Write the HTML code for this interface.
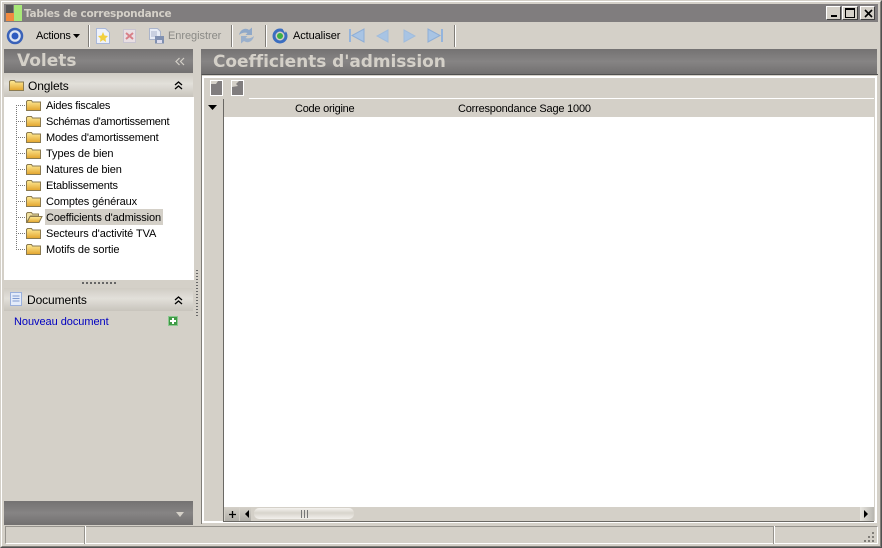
<!DOCTYPE html>
<html><head><meta charset="utf-8">
<style>
*{margin:0;padding:0;box-sizing:border-box}
html,body{width:882px;height:548px;overflow:hidden;background:#d4d0c8}
body{position:relative;font-family:"Liberation Sans",sans-serif;font-size:11px;color:#000}
div,span,svg{position:absolute}
.t{white-space:nowrap;line-height:14px;height:14px}
.sep{width:2px;height:22px;top:25px;background:linear-gradient(90deg,#807d78 50%,#fff 50%)}
.dot{height:1px;background:repeating-linear-gradient(90deg,#777 0 1px,transparent 1px 2px)}
.h{font-family:"DejaVu Sans",sans-serif;font-weight:bold;color:#d4d0c8;white-space:nowrap}
.bar{background:linear-gradient(#747272,#868484 50%,#727070)}
.lt{background:linear-gradient(#d0ccc4,#e2e0da 45%,#c8c4bc)}
</style></head><body>
<svg width="0" height="0"><defs>
<linearGradient id="fg" x1="0" y1="0" x2="0" y2="1"><stop offset="0" stop-color="#ffec98"/><stop offset="1" stop-color="#e2a42c"/></linearGradient>
<symbol id="f" viewBox="0 0 15 11"><path d="M.5 10.500V1.500l1-1h4l1 1.500h8v8.500z" fill="url(#fg)" stroke="#8a7a50"/></symbol>
<symbol id="fo" viewBox="0 0 17 11"><path d="M.5 10.500V1.500l1-1h4l1 1.500h6v2h-8l-4 6.500z" fill="#f0e0a0" stroke="#8a7a50"/><path d="M1 10.500l3-6h12l-3 6z" fill="url(#fg)" stroke="#8a7a50"/></symbol>
<symbol id="dbl" viewBox="0 0 9 9"><path d="M1 4l3.500-3L8 4M1 8l3.500-3L8 8" fill="none" stroke="#000" stroke-width="1.300"/></symbol>
</defs></svg>

<!-- window frame -->
<div style="left:0;top:0;width:882px;height:548px;border-top:1px solid #d4d0c8;border-left:1px solid #d4d0c8;border-right:1px solid #505050;border-bottom:1px solid #505050"></div>
<div style="left:1px;top:1px;width:880px;height:546px;border-top:1px solid #fff;border-left:1px solid #fff;border-right:1px solid #807d78;border-bottom:1px solid #807d78"></div>

<!-- title bar -->
<div style="left:4px;top:4px;width:874px;height:18px;background:#807d7e"></div>
<div style="left:6px;top:5px;width:7px;height:8px;background:#555"></div>
<div style="left:6px;top:13px;width:8px;height:8px;background:#f08a40"></div>
<div style="left:14px;top:5px;width:8px;height:16px;background:#a8e878"></div>
<div class="t h" style="left:24px;top:7px;font-size:10.500px;letter-spacing:-.28px">Tables de correspondance</div>
<div style="left:826px;top:6px;width:15px;height:14px;background:#d4d0c8;border:1px solid;border-color:#fff #404040 #404040 #fff"><div style="left:4px;top:8px;width:6px;height:2px;background:#000"></div></div>
<div style="left:842px;top:6px;width:16px;height:14px;background:#d4d0c8;border:1px solid;border-color:#fff #404040 #404040 #fff"><div style="left:2px;top:1px;width:10px;height:10px;border:1px solid #000;border-top-width:2px"></div></div>
<div style="left:860px;top:6px;width:15px;height:14px;background:#d4d0c8;border:1px solid;border-color:#fff #404040 #404040 #fff"><svg style="left:3px;top:2px" width="9" height="9"><path d="M1 1l7 7M8 1L1 8" stroke="#000" stroke-width="1.600"/></svg></div>

<!-- toolbar -->
<svg style="left:6px;top:27px" width="18" height="18"><circle cx="9" cy="9" r="7" fill="#dfe6f2" stroke="#3a62b8" stroke-width="2.500"/><circle cx="9" cy="9" r="3.500" fill="#2f5cc0"/></svg>
<div class="t" style="left:36px;top:29px;letter-spacing:-.2px">Actions</div>
<svg style="left:73px;top:34px" width="7" height="4"><path d="M0 0h7L3.500 4z" fill="#000"/></svg>
<div class="sep" style="left:88px"></div>
<svg style="left:96px;top:28px" width="14" height="16"><path d="M.5.500h9l4 4v11H.500z" fill="#eef2fb" stroke="#a9b8d8"/><path d="M7 4l1.500 3.500L12 8l-2.500 2.500.5 3.500-3-2-3 2 .5-3.500L2 8l3.500-.5z" fill="#f2d040"/></svg>
<svg style="left:123px;top:29px" width="13" height="14"><rect x=".5" y=".5" width="12" height="13" fill="#e9dfe3" stroke="#c8c4d0"/><path d="M3 4l7 6M10 4l-7 6" stroke="#d88088" stroke-width="2"/></svg>
<svg style="left:149px;top:28px" width="16" height="16"><path d="M.5.500h8l3 3v8H.500z" fill="#e8edf6" stroke="#aab4ca"/><path d="M2 4h6M2 6h6M2 8h6" stroke="#aab4ca"/><rect x="6" y="8" width="9" height="7.500" fill="#8090b0"/><rect x="8" y="12" width="5" height="3" fill="#dde"/></svg>
<div class="t" style="left:168px;top:29px;color:#8a8a86;letter-spacing:-.05px">Enregistrer</div>
<div class="sep" style="left:231px"></div>
<svg style="left:238px;top:26px" width="17" height="19"><path d="M1 9c1-5 6-8 10-5l3-2.500V9H7.500l2-2C7 6 3 7 1 9z" fill="#8fa8c8"/><path d="M16 10c-1 5-6 8-10 5l-3 2.500V10h6.500l-2 2c2.500 1 6.500 0 8.500-2z" fill="#9ab0cc"/></svg>
<div class="sep" style="left:265px"></div>
<svg style="left:272px;top:28px" width="16" height="16"><circle cx="8" cy="8" r="6" fill="none" stroke="#3b6ec0" stroke-width="3"/><circle cx="8" cy="8" r="3" fill="#3cb043"/><path d="M10 0l5 1-2 4z" fill="#d4d0c8"/></svg>
<div class="t" style="left:293px;top:29px;letter-spacing:-.1px">Actualiser</div>
<svg style="left:349px;top:28px" width="16" height="15"><path d="M1 1v13" stroke="#94b4dc" stroke-width="2"/><path d="M15 1v13L3 7.500z" fill="#a8c4e4" stroke="#8eaed6"/></svg>
<svg style="left:376px;top:29px" width="13" height="14"><path d="M12 1v12L1 7z" fill="#a8c4e4" stroke="#a0bcdc"/></svg>
<svg style="left:403px;top:29px" width="13" height="14"><path d="M1 1v12l11-6z" fill="#a8c4e4" stroke="#a0bcdc"/></svg>
<svg style="left:427px;top:28px" width="16" height="15"><path d="M15 1v13" stroke="#94b4dc" stroke-width="2"/><path d="M1 1v13l12-6.500z" fill="#a8c4e4" stroke="#8eaed6"/></svg>
<div class="sep" style="left:454px"></div>

<!-- left panel -->
<div class="bar" style="left:4px;top:49px;width:189px;height:24px"></div>
<div class="h" style="left:17px;top:50px;height:22px;line-height:22px;font-size:17px">Volets</div>
<svg style="left:175px;top:57px" width="10" height="9"><path d="M4.500 1L1 4.500 4.500 8M9 1L5.500 4.500 9 8" fill="none" stroke="#d4d0c8" stroke-width="1.200"/></svg>

<div class="lt" style="left:4px;top:73px;width:189px;height:24px"></div>
<svg style="left:9px;top:80px;" width="15" height="11"><use href="#f"/></svg>
<div class="t" style="left:28px;top:79px;font-size:12px;letter-spacing:-.1px">Onglets</div>
<svg style="left:174px;top:81px" width="9" height="9"><use href="#dbl"/></svg>

<div style="left:4px;top:97px;width:190px;height:183px;background:#fff"></div>
<div style="left:16px;top:105px;width:1px;height:144px;background:repeating-linear-gradient(#777 0 1px,transparent 1px 2px)"></div>

<div class="dot" style="left:16px;top:105px;width:10px"></div><svg style="left:26px;top:100px" width="15" height="11"><use href="#f"/></svg><div class="t" style="left:46px;top:99px;letter-spacing:-.22px">Aides fiscales</div>
<div class="dot" style="left:16px;top:121px;width:10px"></div><svg style="left:26px;top:116px" width="15" height="11"><use href="#f"/></svg><div class="t" style="left:46px;top:115px;letter-spacing:-.26px">Schémas d'amortissement</div>
<div class="dot" style="left:16px;top:137px;width:10px"></div><svg style="left:26px;top:132px" width="15" height="11"><use href="#f"/></svg><div class="t" style="left:46px;top:131px;letter-spacing:-.19px">Modes d'amortissement</div>
<div class="dot" style="left:16px;top:153px;width:10px"></div><svg style="left:26px;top:148px" width="15" height="11"><use href="#f"/></svg><div class="t" style="left:46px;top:147px;letter-spacing:-.08px">Types de bien</div>
<div class="dot" style="left:16px;top:169px;width:10px"></div><svg style="left:26px;top:164px" width="15" height="11"><use href="#f"/></svg><div class="t" style="left:46px;top:163px;letter-spacing:-.13px">Natures de bien</div>
<div class="dot" style="left:16px;top:185px;width:10px"></div><svg style="left:26px;top:180px" width="15" height="11"><use href="#f"/></svg><div class="t" style="left:46px;top:179px;letter-spacing:-.2px">Etablissements</div>
<div class="dot" style="left:16px;top:201px;width:10px"></div><svg style="left:26px;top:196px" width="15" height="11"><use href="#f"/></svg><div class="t" style="left:46px;top:195px;letter-spacing:-.12px">Comptes généraux</div>
<div class="dot" style="left:16px;top:217px;width:10px"></div><svg style="left:26px;top:212px" width="17" height="11"><use href="#fo"/></svg>
<div style="left:45px;top:209px;width:118px;height:16px;background:#d4d0c8"></div><div class="t" style="left:46px;top:211px;letter-spacing:-.13px">Coefficients d'admission</div>
<div class="dot" style="left:16px;top:233px;width:10px"></div><svg style="left:26px;top:228px" width="15" height="11"><use href="#f"/></svg><div class="t" style="left:46px;top:227px;letter-spacing:-.09px">Secteurs d'activité TVA</div>
<div class="dot" style="left:16px;top:249px;width:10px"></div><svg style="left:26px;top:244px" width="15" height="11"><use href="#f"/></svg><div class="t" style="left:46px;top:243px;letter-spacing:-.07px">Motifs de sortie</div>

<!-- splitter h -->
<div style="left:82px;top:282px;width:35px;height:2px;background:repeating-linear-gradient(90deg,#666 0 2px,transparent 2px 4px)"></div>

<div class="lt" style="left:4px;top:288px;width:189px;height:23px"></div>
<svg style="left:10px;top:292px" width="12" height="14"><rect x=".5" y=".5" width="11" height="13" fill="#e4ecfa" stroke="#9ab0dc"/><path d="M2.500 4h7M2.500 6.500h7M2.500 9h7" stroke="#7f9ad0"/></svg>
<div class="t" style="left:27px;top:293px;font-size:12px;letter-spacing:-.1px">Documents</div>
<svg style="left:174px;top:296px" width="9" height="9"><use href="#dbl"/></svg>
<div class="t" style="left:14px;top:315px;color:#0000c0;letter-spacing:-.05px">Nouveau document</div>
<div style="left:168px;top:316px;width:10px;height:10px;background:#3f9a45;border:1px solid #8cc890"></div>
<svg style="left:168px;top:316px" width="10" height="10"><path d="M5 2v6M2 5h6" stroke="#fff" stroke-width="2"/></svg>

<div class="bar" style="left:4px;top:501px;width:189px;height:24px"></div>
<svg style="left:176px;top:512px" width="8" height="5"><path d="M0 0h8L4 5z" fill="#d4d0c8"/></svg>

<!-- vertical splitter -->
<div style="left:196px;top:270px;width:2px;height:46px;background:repeating-linear-gradient(#666 0 1px,transparent 1px 3px)"></div>

<!-- right panel -->
<div class="bar" style="left:201px;top:49px;width:676px;height:25px"></div>
<div class="h" style="left:213px;top:51px;height:22px;line-height:22px;font-size:17px;letter-spacing:-.07px">Coefficients d'admission</div>
<div style="left:201px;top:74px;width:677px;height:450px;border-left:1px solid #807d78;border-top:1px solid #505050"></div>
<div style="left:202px;top:76px;width:675px;height:447px;border:2px solid #fff"></div>
<div style="left:249px;top:98px;width:625px;height:1px;background:#fff"></div>

<svg style="left:210px;top:80px" width="13" height="16"><path d="M.5.500h12v15H.500z" fill="#807d7e" stroke="#fff"/><path d="M1 1h7l-2 3H1z" fill="#d4d0c8"/></svg>
<svg style="left:231px;top:80px" width="13" height="16"><path d="M.5.500h12v15H.500z" fill="#807d7e" stroke="#fff"/><path d="M1 1h7l-3 3 2 2-6 1z" fill="#d4d0c8"/></svg>

<svg style="left:208px;top:105px" width="9" height="5"><path d="M0 0h9L4.500 5z" fill="#000"/></svg>
<div style="left:223px;top:99px;width:1px;height:423px;background:#6a6864"></div>
<div class="t" style="left:295px;top:102px;letter-spacing:-.25px">Code origine</div>
<div class="t" style="left:458px;top:102px;letter-spacing:-.2px">Correspondance Sage 1000</div>

<div style="left:224px;top:117px;width:650px;height:390px;background:#fff"></div>
<div style="left:224px;top:521px;width:650px;height:1px;background:#6a6864"></div>

<!-- scrollbar -->
<div style="left:225px;top:507px;width:14px;height:14px;background:linear-gradient(#d4d0c8,#b0aea8)"></div>
<svg style="left:228px;top:510px" width="9" height="9"><path d="M4.500 1v7M1 4.500h7" stroke="#000" stroke-width="1.300"/></svg>
<div style="left:240px;top:507px;width:11px;height:14px;background:linear-gradient(#d4d0c8,#b0aea8)"></div>
<svg style="left:245px;top:510px" width="4" height="8"><path d="M4 0v8L0 4z" fill="#000"/></svg>
<div style="left:254px;top:508px;width:100px;height:11px;border-radius:5px;background:linear-gradient(#f4f2ee,#d8d4cc 45%,#f2f0ec)"></div>
<div style="left:301px;top:510px;width:7px;height:8px;background:repeating-linear-gradient(90deg,#777 0 1px,transparent 1px 3px)"></div>
<div style="left:860px;top:507px;width:14px;height:14px;background:linear-gradient(90deg,#e8e6e0,#b8b6b0)"></div>
<svg style="left:864px;top:510px" width="4" height="8"><path d="M0 0v8l4-4z" fill="#000"/></svg>

<!-- status bar -->
<div style="left:5px;top:526px;width:873px;height:18px;border:1px solid;border-color:#96938d #fff #fff #96938d"></div>
<div style="left:84px;top:526px;width:2px;height:18px;background:linear-gradient(90deg,#96938d 50%,#fff 50%)"></div>
<div style="left:773px;top:526px;width:2px;height:18px;background:linear-gradient(90deg,#96938d 50%,#fff 50%)"></div>
<svg style="left:863px;top:531px" width="12" height="12"><path d="M9 1h2v2H9zM5 5h2v2H5zM9 5h2v2H9zM1 9h2v2H1zM5 9h2v2H5zM9 9h2v2H9z" fill="#807d78"/></svg>
</body></html>
